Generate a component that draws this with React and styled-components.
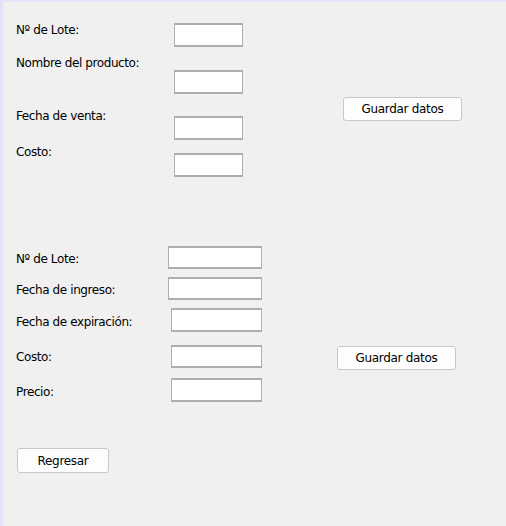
import React from "react";
import styled, { createGlobalStyle } from "styled-components";

const Global = createGlobalStyle`
  html, body { margin: 0; padding: 0; background: #f0f0f0; }
  body { font-family: "DejaVu Sans", "Liberation Sans", sans-serif; }
`;

const Frame = styled.div`
  box-sizing: border-box;
  width: 506px;
  height: 526px;
  border-left: 3px solid #e2e2f8;
  border-top: 2px solid #e2e2f8;
  background: #f0f0f0;
  padding-left: 13px;
  display: flex;
  flex-direction: column;
  overflow: hidden;
`;

const Section = styled.div`
  display: flex;
  align-items: flex-start;
  margin-top: ${(p) => p.$top || 0}px;
`;

const LabelCol = styled.div`
  display: flex;
  flex-direction: column;
  width: ${(p) => p.$width}px;
  flex: none;
`;

const Label = styled.div`
  font-size: 12px;
  line-height: 14px;
  letter-spacing: -0.4px;
  color: #000;
  white-space: nowrap;
  margin-top: ${(p) => p.$gap}px;
`;

const FieldCol = styled.div`
  display: flex;
  flex-direction: column;
  flex: none;
`;

const Field = styled.input`
  box-sizing: border-box;
  display: block;
  width: ${(p) => p.$width}px;
  height: ${(p) => p.$height || 24}px;
  margin: ${(p) => p.$gap}px 0 0 ${(p) => p.$indent || 0}px;
  padding: 0 3px;
  border: 1px solid #adadb2;
  border-top-width: 2px;
  border-bottom-width: 2px;
  background: #fff;
  outline: none;
  font: inherit;
  font-size: 12px;
`;

const Button = styled.button`
  box-sizing: border-box;
  flex: none;
  width: ${(p) => p.$width}px;
  height: ${(p) => p.$height}px;
  margin: ${(p) => p.$top}px 0 0 ${(p) => p.$left}px;
  padding: 0;
  border: 1px solid #c8c8c8;
  border-radius: 3px;
  background: #fdfdfd;
  color: #000;
  font-family: inherit;
  font-size: 12px;
  line-height: 14px;
  letter-spacing: -0.3px;
  cursor: pointer;
`;

export default function App() {
  return (
    <>
      <Global />
      <Frame>
        <Section>
          <LabelCol $width={158}>
            <Label $gap={21}>Nº de Lote:</Label>
            <Label $gap={19}>Nombre del producto:</Label>
            <Label $gap={39}>Fecha de venta:</Label>
            <Label $gap={22}>Costo:</Label>
          </LabelCol>
          <FieldCol>
            <Field $width={69} $gap={21} />
            <Field $width={69} $gap={23} />
            <Field $width={69} $gap={22} />
            <Field $width={69} $gap={13} />
          </FieldCol>
          <Button $width={119} $height={24} $top={95} $left={100}>
            Guardar datos
          </Button>
        </Section>

        <Section $top={69}>
          <LabelCol $width={152}>
            <Label $gap={6}>Nº de Lote:</Label>
            <Label $gap={17}>Fecha de ingreso:</Label>
            <Label $gap={18}>Fecha de expiración:</Label>
            <Label $gap={21}>Costo:</Label>
            <Label $gap={21}>Precio:</Label>
          </LabelCol>
          <FieldCol>
            <Field $width={94} $height={23} $gap={0} />
            <Field $width={94} $height={23} $gap={8} />
            <Field $width={91} $height={24} $gap={8} $indent={3} />
            <Field $width={91} $height={23} $gap={13} $indent={3} />
            <Field $width={91} $height={24} $gap={10} $indent={3} />
          </FieldCol>
          <Button $width={119} $height={24} $top={100} $left={75}>
            Guardar datos
          </Button>
        </Section>

        <Section>
          <Button $width={92} $height={25} $top={46} $left={1}>
            Regresar
          </Button>
        </Section>
      </Frame>
    </>
  );
}
